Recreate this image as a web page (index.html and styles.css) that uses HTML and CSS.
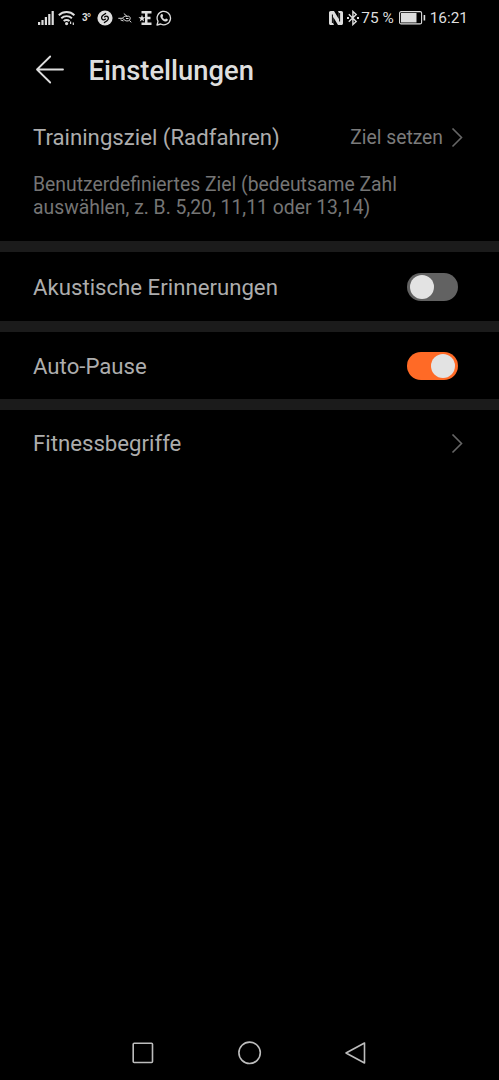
FILE: index.html
```html
<!DOCTYPE html>
<html lang="de">
  <head>
    <meta charset="UTF-8" />
    <meta name="viewport" content="width=device-width, initial-scale=1.0" />
    <title>Einstellungen</title>
    <link rel="stylesheet" href="styles.css">
  </head>
  <body>
    <div class="status-bar">
      <div class="status-left">
        <svg class="icon-signal" width="16" height="16" viewBox="0 0 16 16" fill="currentColor">
          <path d="M0 12h2.200v3H0zM3.400 10h2.200v5H3.400zM6.800 7H9v8H6.800zM10.200 4h2.200v11h-2.200zM13.600 1h2.200v14h-2.200z" />
        </svg>
        <svg class="icon-wifi" width="18" height="16" viewBox="0 0 18 16" fill="none" stroke="currentColor" stroke-width="1.900">
          <path d="M.8 5.200C5.200.9 12 .9 16.400 5.200M3.300 8.300c3-2.900 7.600-2.900 10.600 0M5.700 11.200c1.600-1.600 4.200-1.600 5.800 0" />
          <circle cx="8.600" cy="13.600" r="1.600" fill="currentColor" stroke="none" />
          <path d="M12.600 11.500v2.500M15.300 12.500v2.500" stroke-width="1.200" />
        </svg>
        <span class="temperature">3°</span>
        <svg class="icon-shazam" width="16" height="16" viewBox="0 0 16 16">
          <circle cx="8" cy="8" r="7.600" fill="currentColor" />
          <path d="M8.600 3.400 6 5.300c-2 1.500-1.600 3.500-.3 4.300 1 .6 2 .2 2.800-.5M7.400 12.600l2.600-1.900c2-1.500 1.600-3.500.3-4.300-1-.6-2-.2-2.800.5" fill="none" stroke="#000" stroke-width="1.300" stroke-linecap="round" />
        </svg>
        <svg class="icon-bird" width="14" height="12" viewBox="0 0 14 12" fill="none" stroke="currentColor">
          <path d="M.3 6.300h4.200C5.500 4.500 7 4 9 4.300L5.800 1.500M9 4.300c2-.5 3.500.5 3.200 2.500-.3 2-3 2.800-5 1.700L4.500 6.300M8 6.500h2.500M11.300 8.500l2 1.800M2.500 7.800 5.500 9" />
        </svg>
        <svg class="icon-star-e" width="14" height="16" viewBox="0 0 14 16" fill="currentColor">
          <path d="M3.500 1h10v2.500h-4v3.300h3v2.400h-3v3.300h4V15h-10v-2.500H7v-9H3.500z" />
          <path d="m4 4.800.9 2.400 2.600.1-2.100 1.600.8 2.600L4 10l-2.200 1.500.8-2.600L.5 7.300l2.600-.1z" />
        </svg>
        <svg class="icon-whatsapp" width="16" height="16" viewBox="0 0 16 16">
          <path d="m1 15 1-3.600A6.700 6.700 0 1 1 4.700 14z" fill="none" stroke="currentColor" stroke-width="1.300" stroke-linejoin="round" />
          <path d="M5.300 4.200c.5-.4 1.100-.3 1.300.2l.5 1.300c.1.400-.5.900-.7 1.200.5 1.200 1.500 2 2.700 2.500.4-.3.800-1 1.200-.8l1.300.7c.4.200.2 1-.1 1.400-.7.900-1.900 1-3.200.5C6.400 10.400 4.900 8.600 4.400 6.800c-.2-1 .1-2 .9-2.600z" fill="currentColor" />
        </svg>
      </div>
      <div class="status-right">
        <svg class="icon-nfc" width="14" height="16" viewBox="0 0 14 16">
          <path d="M1.800 1H5l4.800 8V2.800L9 1h3.200c1.200 0 1.800.8 1.800 1.800v10.400c0 1-.6 1.800-1.800 1.800H9L4.200 7v6.200L5 15H1.800C.6 15 0 14.200 0 13.200V2.800C0 1.800.6 1 1.800 1z" fill="currentColor" />
          <path d="M3.400 4.500V13M10.600 11.500V3" stroke="#000" />
        </svg>
        <svg class="icon-bluetooth" width="12" height="16" viewBox="0 0 12 16" fill="none" stroke="currentColor" stroke-width="1.400">
          <path d="m1.800 4.300 7.400 7.100L5.900 14.500V1.500l3.300 3.100-7.400 7.100" />
          <path d="M0 8h2M10 8h2" stroke-width="1.800" />
        </svg>
        <span class="battery-level">75 %</span>
        <svg class="icon-battery" width="27" height="14" viewBox="0 0 27 14">
          <rect x=".6" y=".6" width="22" height="12.300" rx="1.500" fill="none" stroke="currentColor" stroke-width="1.100" />
          <rect x="2" y="2" width="15.500" height="9.500" fill="currentColor" />
          <path d="M25.400 4v5.500" stroke="currentColor" stroke-width="1.600" />
        </svg>
        <span class="clock">16:21</span>
      </div>
    </div>

    <header>
      <svg class="back" width="30" height="30" viewBox="0 0 30 30" fill="none" stroke="currentColor" stroke-width="1.800" stroke-linecap="round" stroke-linejoin="round">
        <path d="M28 14.500H2M15.200 1.500 2 14.500l13.200 13" />
      </svg>
      <h1>Einstellungen</h1>
    </header>

    <main>
      <section class="goal">
        <div class="row">
          <span class="label">Trainingsziel (Radfahren)</span>
          <span class="value">Ziel setzen</span>
          <svg class="chevron" width="12" height="20" viewBox="0 0 12 20">
            <path d="m1.500.5 9 9-9 9" />
          </svg>
        </div>
        <p class="hint">Benutzerdefiniertes Ziel (bedeutsame Zahl auswählen, z. B. 5,20, 11,11 oder 13,14)</p>
      </section>

      <section class="row reminders">
        <span class="label">Akustische Erinnerungen</span>
        <span class="switch"></span>
      </section>

      <section class="row auto-pause">
        <span class="label">Auto-Pause</span>
        <span class="switch on"></span>
      </section>

      <section class="row terms">
        <span class="label">Fitnessbegriffe</span>
        <svg class="chevron" width="12" height="20" viewBox="0 0 12 20">
          <path d="m1.500.5 9 9-9 9" />
        </svg>
      </section>
    </main>

    <nav>
      <svg width="24" height="24" viewBox="0 0 24 24">
        <rect x="2.200" y="2.200" width="19.300" height="19.300" rx="1" />
      </svg>
      <svg width="24" height="24" viewBox="0 0 24 24">
        <circle cx="11.600" cy="11.800" r="10.700" />
      </svg>
      <svg width="24" height="24" viewBox="0 0 24 24">
        <path d="M20.500 2v20L2 12z" />
      </svg>
    </nav>
  </body>
</html>
```

FILE: styles.css
```css
* {
  box-sizing: border-box;
}

body {
  font-family: Roboto, sans-serif;
  margin: 0;
  height: 100vh;
  display: flex;
  flex-direction: column;
  background-color: #000;
  color: #adadad;
}

svg {
  display: block;
  flex: none;
}

.status-bar {
  height: 35px;
  padding: 0 31px 0 38px;
  display: flex;
  justify-content: space-between;
  color: #dedede;
}

.status-left,
.status-right {
  display: flex;
  align-items: center;
  white-space: nowrap;
}

.icon-wifi {
  margin-left: 4px;
}

.temperature {
  width: 8px;
  margin-left: 6px;
  font-family: 'Liberation Sans', sans-serif;
  font-size: 10px;
  font-weight: bold;
  letter-spacing: -0.5px;
}

.icon-shazam {
  margin-left: 7px;
}

.icon-bird {
  margin-left: 5px;
}

.icon-star-e {
  margin-left: 6px;
}

.icon-whatsapp {
  margin-left: 4px;
}

.icon-bluetooth {
  margin-left: 4px;
}

.battery-level,
.clock {
  font-size: 15.4px;
}

.battery-level {
  margin-left: 2px;
}

.icon-battery {
  margin-left: 5px;
}

.clock {
  margin-left: 4px;
}

header {
  height: 70px;
  padding-left: 35px;
  display: flex;
  align-items: center;
  color: #dedede;
}

h1 {
  margin: 1px 0 0 23.5px;
  font-size: 27.4px;
  font-weight: 500;
}

.row {
  display: flex;
  align-items: center;
  padding: 0 36px 0 33px;
}

.label {
  margin-right: auto;
  padding-bottom: 2px;
  font-size: 22.2px;
}

.value {
  font-size: 19.3px;
  color: #7b7b7b;
}

.chevron {
  margin-left: 8px;
  fill: none;
  stroke: #666;
  stroke-width: 1.6px;
}

.goal {
  height: 136px;
}

.goal .row {
  height: 65px;
}

.hint {
  margin: 3px 90px 0 33px;
  font-size: 19.35px;
  line-height: 23px;
  color: #757575;
}

.reminders,
.auto-pause,
.terms {
  border-top: 11px solid #1b1b1b;
}

.reminders {
  height: 80px;
}

.auto-pause {
  height: 78px;
}

.terms {
  height: 78px;
}

.reminders,
.auto-pause {
  padding-right: 41px;
}

.reminders .label,
.auto-pause .label {
  padding-bottom: 0;
}

.switch {
  width: 51px;
  height: 28px;
  padding: 2px 3px;
  display: flex;
  border-radius: 14px;
  background-color: #626262;
}

.switch::before {
  content: '';
  width: 24px;
  height: 24px;
  border-radius: 50%;
  background-color: #e3e3e3;
}

.switch.on {
  justify-content: flex-end;
  background-color: #ff6a26;
}

nav {
  height: 54px;
  margin-top: auto;
  padding: 0 131px;
  display: flex;
  justify-content: space-between;
  align-items: center;
}

nav svg {
  fill: none;
  stroke: #bdbdbd;
  stroke-width: 1.6px;
  stroke-linejoin: round;
}
```
